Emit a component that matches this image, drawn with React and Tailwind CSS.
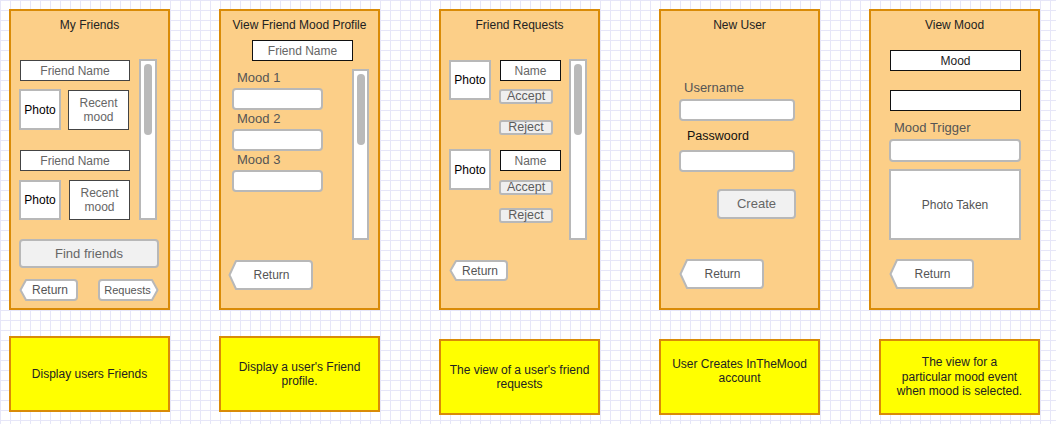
const panelBox =
  "border-2 border-[#d98b07] bg-[#fccf88] flex flex-col pt-[7px] h-[301px]";
const titleCls = "h-[14px] leading-[14px] text-[12px] text-center text-[#222]";
const blackBox =
  "bg-white border border-[#111] flex items-center justify-center text-[12px]";
const photoBox =
  "bg-white border-2 border-[#b8b8b8] flex items-center justify-center text-[12px] text-black";
const inputBox = "bg-white border-2 border-[#b8b8b8] rounded-[4px]";
const label = "h-[15px] leading-[15px] text-[13px] text-[#555]";
const smallBtn =
  "w-[54px] h-[15px] bg-[#efefef] border-2 border-[#b8b8b8] rounded-[3px] flex items-center justify-center text-[12.5px] leading-none text-[#5c5c5c]";

function ArrowButton({ w, h, d, left = true, className, textClass, children }) {
  const path = left
    ? `M${d} 1 H${w - 4} Q${w - 1} 1 ${w - 1} 4 V${h - 4} Q${w - 1} ${h - 1} ${w - 4} ${h - 1} H${d} L1.5 ${h / 2} Z`
    : `M${w - d} 1 H4 Q1 1 1 4 V${h - 4} Q1 ${h - 1} 4 ${h - 1} H${w - d} L${w - 1.5} ${h / 2} Z`;
  return (
    <div className={`relative flex items-center justify-center ${className}`}>
      <svg className="absolute inset-0" width={w} height={h} viewBox={`0 0 ${w} ${h}`}>
        <path d={path} fill="#fff" stroke="#b8b8b8" strokeWidth="2" strokeLinejoin="round" />
      </svg>
      <span className={`relative ${textClass}`}>{children}</span>
    </div>
  );
}

function Scrollbar({ className }) {
  return (
    <div className={`bg-white border-2 border-[#b8b8b8] pt-[3px] pl-[3px] ${className}`}>
      <div className="w-[8px] h-[71px] rounded-full bg-[#bababa]" />
    </div>
  );
}

function FriendName() {
  return (
    <div className={`${blackBox} border-[#444] text-[#666] ml-[1px] w-[110px] h-[21px]`}>
      Friend Name
    </div>
  );
}

function MyFriends() {
  return (
    <div className={`${panelBox} w-[161px] ml-[9px]`}>
      <div className={titleCls}>My Friends</div>
      <div className="flex items-start mt-[27px] pl-[8px]">
        <div className="w-[120px] flex flex-col">
          <div className="mt-[1px]">
            <FriendName />
          </div>
          <div className="flex items-start mt-[8px]">
            <div className={`${photoBox} w-[42px] h-[41px]`}>Photo</div>
            <div className={`${blackBox} border-[#444] text-[#666] ml-[7px] mt-[1px] w-[61px] h-[40px] leading-[14px] text-center`}>
              Recent
              <br />
              mood
            </div>
          </div>
          <div className="mt-[20px]">
            <FriendName />
          </div>
          <div className="flex items-start mt-[9px]">
            <div className={`${photoBox} w-[42px] h-[40px]`}>Photo</div>
            <div className={`${blackBox} border-[#444] text-[#666] ml-[8px] w-[61px] h-[40px] leading-[14px] text-center`}>
              Recent
              <br />
              mood
            </div>
          </div>
        </div>
        <Scrollbar className="w-[18px] h-[161px]" />
      </div>
      <div className="ml-[8px] mt-[19px] w-[140px] h-[29px] bg-[#f1f1f1] border-2 border-[#b8b8b8] rounded-[4px] flex items-center justify-center text-[13px] text-[#666]">
        Find friends
      </div>
      <div className="flex mt-[11px] pl-[8px]">
        <ArrowButton w={59} h={22} d={7} className="w-[59px] h-[22px]" textClass="text-[12px] text-[#555] pl-[3px]">
          Return
        </ArrowButton>
        <ArrowButton w={61} h={22} d={7} left={false} className="ml-[20px] w-[61px] h-[22px]" textClass="text-[11px] text-[#555] pr-[2px]">
          Requests
        </ArrowButton>
      </div>
    </div>
  );
}

function FriendProfile() {
  return (
    <div className={`${panelBox} w-[161px] ml-[49px]`}>
      <div className={titleCls}>View Friend Mood Profile</div>
      <div className={`${blackBox} text-[#666] ml-[31px] mt-[8px] w-[101px] h-[21px]`}>Friend Name</div>
      <div className="flex items-start mt-[8px]">
        <div className="w-[131px] pl-[11px] flex flex-col">
          <div className={`${label} ml-[5px] mt-[1px]`}>Mood 1</div>
          <div className={`${inputBox} mt-[3px] w-[91px] h-[22px]`} />
          <div className={`${label} ml-[5px] mt-[1px]`}>Mood 2</div>
          <div className={`${inputBox} mt-[3px] w-[91px] h-[22px]`} />
          <div className={`${label} ml-[5px] mt-[1px]`}>Mood 3</div>
          <div className={`${inputBox} mt-[3px] w-[91px] h-[22px]`} />
        </div>
        <Scrollbar className="w-[17px] h-[171px]" />
      </div>
      <ArrowButton w={85} h={30} d={8} className="ml-[7px] mt-[20px] w-[85px] h-[30px]" textClass="text-[12px] text-[#555] pl-[2px]">
        Return
      </ArrowButton>
    </div>
  );
}

function Request({ photoH, className, nameMt, acceptMt, rejectMt }) {
  return (
    <div className={`flex items-start ${className}`}>
      <div className={`${photoBox} w-[42px] ${photoH}`}>Photo</div>
      <div className="ml-[9px] flex flex-col">
        <div className={`${blackBox} text-[#666] w-[61px] h-[21px] ${nameMt}`}>Name</div>
        <div className={`${smallBtn} -ml-[1px] ${acceptMt}`}>Accept</div>
        <div className={`${smallBtn} -ml-[1px] ${rejectMt}`}>Reject</div>
      </div>
    </div>
  );
}

function FriendRequests() {
  return (
    <div className={`${panelBox} w-[161px] ml-[59px]`}>
      <div className={titleCls}>Friend Requests</div>
      <div className="flex items-start mt-[27px] pl-[8px]">
        <div className="w-[120px] flex flex-col">
          <Request photoH="h-[40px]" className="mt-[1px]" nameMt="" acceptMt="mt-[8px]" rejectMt="mt-[16px]" />
          <Request photoH="h-[41px]" className="mt-[14px]" nameMt="mt-[1px]" acceptMt="mt-[9px]" rejectMt="mt-[13px]" />
        </div>
        <Scrollbar className="w-[18px] h-[181px]" />
      </div>
      <ArrowButton w={59} h={21} d={7} className="ml-[8px] mt-[20px] w-[59px] h-[21px]" textClass="text-[12px] text-[#555] pl-[3px]">
        Return
      </ArrowButton>
    </div>
  );
}

function NewUser() {
  return (
    <div className={`${panelBox} w-[161px] ml-[59px]`}>
      <div className={titleCls}>New User</div>
      <div className={`${label} ml-[23px] mt-[48px]`}>Username</div>
      <div className={`${inputBox} ml-[18px] mt-[4px] w-[116px] h-[22px]`} />
      <div className="h-[15px] leading-[15px] text-[12.5px] text-[#111] ml-[26px] mt-[8px]">Passwoord</div>
      <div className={`${inputBox} ml-[18px] mt-[6px] w-[116px] h-[22px]`} />
      <div className="ml-[56px] mt-[17px] w-[79px] h-[30px] bg-[#f1f1f1] border-2 border-[#b8b8b8] rounded-[4px] flex items-center justify-center text-[13px] text-[#666]">
        Create
      </div>
      <ArrowButton w={85} h={30} d={8} className="ml-[18px] mt-[40px] w-[85px] h-[30px]" textClass="text-[12px] text-[#555] pl-[2px]">
        Return
      </ArrowButton>
    </div>
  );
}

function ViewMood() {
  return (
    <div className={`${panelBox} w-[171px] ml-[49px]`}>
      <div className={titleCls}>View Mood</div>
      <div className={`${blackBox} text-[#222] ml-[19px] mt-[18px] w-[131px] h-[21px]`}>Mood</div>
      <div className={`${blackBox} ml-[19px] mt-[19px] w-[131px] h-[21px]`} />
      <div className={`${label} ml-[23px] mt-[9px]`}>Mood Trigger</div>
      <div className={`${inputBox} ml-[18px] mt-[4px] w-[132px] h-[23px]`} />
      <div className="ml-[18px] mt-[7px] w-[132px] h-[71px] bg-white border-2 border-[#b8b8b8] flex items-center justify-center text-[12px] text-[#555]">
        Photo Taken
      </div>
      <ArrowButton w={85} h={30} d={8} className="ml-[18px] mt-[19px] w-[85px] h-[30px]" textClass="text-[12px] text-[#555] pl-[2px]">
        Return
      </ArrowButton>
    </div>
  );
}

function Note({ className, children }) {
  return (
    <div
      className={`w-[161px] h-[76px] border-2 border-[#d98b07] bg-[#ffff00] flex items-center justify-center text-center text-[12px] leading-[14.5px] text-[#222] ${className}`}
    >
      <div>{children}</div>
    </div>
  );
}

export default function App() {
  return (
    <div className="w-[1056px] h-[424px] overflow-hidden bg-white bg-[linear-gradient(to_right,#e6e6f8_1px,transparent_1px),linear-gradient(to_bottom,#e6e6f8_1px,transparent_1px)] bg-[size:10px_10px] font-['Liberation_Sans',Arial,sans-serif]">
      <div className="flex items-start pt-[9px]">
        <MyFriends />
        <FriendProfile />
        <FriendRequests />
        <NewUser />
        <ViewMood />
      </div>
      <div className="flex items-start mt-[26px]">
        <Note className="ml-[9px]">Display users Friends</Note>
        <Note className="ml-[49px]">
          Display a user's Friend
          <br />
          profile.
        </Note>
        <Note className="ml-[59px] mt-[3px]">
          The view of a user's friend
          <br />
          requests
        </Note>
        <Note className="ml-[59px] mt-[3px] pb-[12px]">
          User Creates InTheMood
          <br />
          account
        </Note>
        <Note className="ml-[59px] mt-[3px]">
          The view for a
          <br />
          particular mood event
          <br />
          when mood is selected.
        </Note>
      </div>
    </div>
  );
}
